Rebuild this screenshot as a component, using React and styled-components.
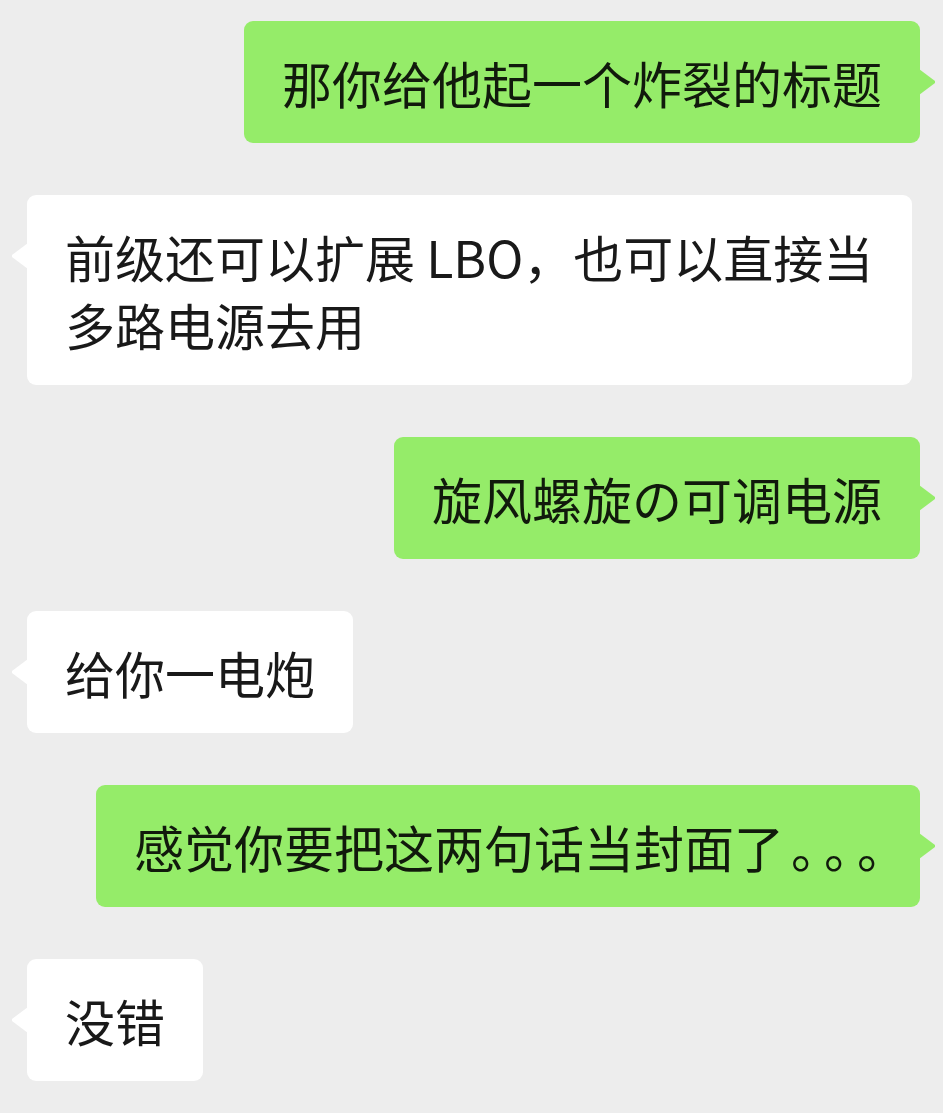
import React from "react";
import styled, { createGlobalStyle, css } from "styled-components";

const GlobalStyle = createGlobalStyle`
  html, body {
    margin: 0;
    padding: 0;
    background: #ededed;
  }
  body {
    font-family: "Noto Sans CJK SC", "Noto Sans", sans-serif;
  }
`;

const ChatWrapper = styled.div`
  width: 943px;
  min-height: 1113px;
  box-sizing: border-box;
  padding: 21px 23px 30px 27px;
  display: flex;
  flex-direction: column;
  gap: 52px;
  background: #ededed;
`;

const Row = styled.div`
  display: flex;
  justify-content: ${(p) => (p.$mine ? "flex-end" : "flex-start")};
`;

const Bubble = styled.div`
  position: relative;
  box-sizing: border-box;
  max-width: 885px;
  padding: 27px 38px;
  border-radius: 9px;
  font-size: 50px;
  line-height: 68px;
  color: ${(p) => (p.$mine ? "#111a0c" : "#191919")};
  background: ${(p) => (p.$mine ? "#95ec69" : "#ffffff")};
  word-break: break-all;

  &::before {
    content: "";
    position: absolute;
    top: 48px;
    width: 16px;
    height: 26px;
    background: inherit;
    ${(p) =>
      p.$mine
        ? css`
            right: -15px;
            clip-path: polygon(0 0, 100% 46%, 100% 54%, 0 100%);
          `
        : css`
            left: -15px;
            clip-path: polygon(100% 0, 0 46%, 0 54%, 100% 100%);
          `}
  }
`;

/* half-width full stops, spaced like the phone font */
const Dots = styled.span`
  font-feature-settings: "halt";
  text-spacing-trim: space-all;
  letter-spacing: 8px;
  margin-left: 7px;
  margin-right: -8px;
  white-space: nowrap;
`;

const messages = [
  { mine: true, text: "那你给他起一个炸裂的标题" },
  { mine: false, text: "前级还可以扩展 LBO，也可以直接当多路电源去用" },
  { mine: true, text: "旋风螺旋の可调电源" },
  { mine: false, text: "给你一电炮" },
  { mine: true, text: "感觉你要把这两句话当封面了", dots: "。。。" },
  { mine: false, text: "没错" },
];

export default function App() {
  return (
    <>
      <GlobalStyle />
      <ChatWrapper>
        {messages.map((m, i) => (
          <Row key={i} $mine={m.mine}>
            <Bubble $mine={m.mine}>
              {m.text}
              {m.dots && <Dots>{m.dots}</Dots>}
            </Bubble>
          </Row>
        ))}
      </ChatWrapper>
    </>
  );
}
